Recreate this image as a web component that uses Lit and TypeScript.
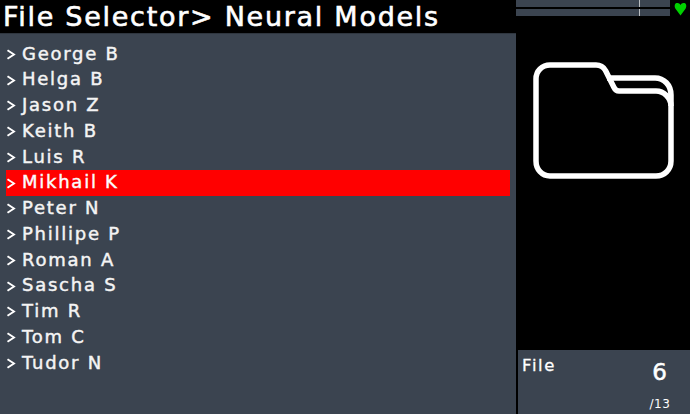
import { LitElement, html, css } from "lit";
import { customElement } from "lit/decorators.js";

const NAMES = ["George B","Helga B","Jason Z","Keith B","Luis R","Mikhail K","Peter N","Phillipe P","Roman A","Sascha S","Tim R","Tom C","Tudor N"];

@customElement("app-root")
export class AppRoot extends LitElement {
  static styles = css`
    :host { display: block; width: 690px; height: 414px; background: #000; color: #fff; font-family: "DejaVu Sans", sans-serif; overflow: hidden; }
    .screen { display: grid; grid-template-columns: 516px 174px; height: 414px; }
    .left { display: flex; flex-direction: column; height: 414px; }
    .title { height: 33px; font-size: 27px; line-height: 34px; padding-left: 3px; white-space: nowrap; letter-spacing: 1.72px; -webkit-text-stroke: 0.6px #fff; }
    .list { flex: 1; background: #3b4450; border-top: 1px solid #2f363f; padding: 7.5px 6px 0 6px; display: flex; flex-direction: column; }
    .row { height: 25.75px; line-height: 23px; font-size: 18px; display: flex; letter-spacing: 1.75px; color: #f4f4f4; -webkit-text-stroke: 0.45px #f4f4f4; }
    .row.sel { background: #ff0000; color: #fff; }
    .chev { width: 16px; flex: none; display: flex; align-items: center; }
    .chev svg { display: block; }
    .right { display: flex; flex-direction: column; height: 414px; }
    .top { display: flex; height: 24px; }
    .bars { width: 154px; display: flex; flex-direction: column; gap: 2px; }
    .bar { background: #3b4450; position: relative; height: 7px; }
    .tick { position: absolute; left: 123px; top: 0; bottom: 0; width: 1px; background: #b8bcc0; }
    .heart { margin: 2px 0 0 4px; }
    .folder { flex: 1; padding: 38px 0 0 17px; }
    .folder svg { display: block; }
    .info { height: 64px; margin-left: 2px; background: #3b4450; display: grid; grid-template-columns: 1fr auto; padding: 0 0 0 4px; }
    .lbl { font-size: 16.5px; line-height: 31px; letter-spacing: 1.6px; -webkit-text-stroke: 0.3px #fff; }
    .nums { width: 56px; display: flex; flex-direction: column; align-items: center; }
    .big { font-size: 23px; line-height: 26px; margin-top: 9px; margin-left: -5px; -webkit-text-stroke: 0.5px #fff; }
    .small { font-size: 12px; line-height: 14px; margin-top: 12px; margin-left: -4px; letter-spacing: 0.6px; }
  `;

  render() {
    return html`<div class="screen">
      <div class="left">
        <div class="title">File Selector&gt; Neural Models</div>
        <div class="list">
          ${NAMES.map((n, i) => html`<div class="row ${i === 5 ? "sel" : ""}">
            <span class="chev"><svg width="10" height="11" viewBox="0 0 10 11"><path d="M1.500 1.200 8 5.500 1.500 9.800" fill="none" stroke="#fff" stroke-width="1.900"/></svg></span>
            <span>${n}</span>
          </div>`)}
        </div>
      </div>
      <div class="right">
        <div class="top">
          <div class="bars">
            <div class="bar"><div class="tick"></div></div>
            <div class="bar"><div class="tick"></div></div>
          </div>
          <svg class="heart" width="13" height="14" viewBox="0 0 13 14"><path d="M6.500 13.500 1.500 6.800C.2 4.800.4 1.600 2.700 1.100c1.700-.4 3.100.5 3.800 2 .7-1.500 2.100-2.400 3.800-2 2.300.5 2.500 3.700 1.200 5.700z" fill="#00d000"/></svg>
        </div>
        <div class="folder">
          <svg width="142" height="118" viewBox="0 0 142 118" fill="none" stroke="#fff" stroke-width="5.500" stroke-linejoin="round">
            <path d="M17 3H63c4.500 0 7.500 2 9.500 5.500L81 25.500c1.200 2.500 2.500 3.500 5 3.500H123c8 0 15 7 15 15V99c0 8.500-6.500 15-15 15H17C9 114 3 107.500 3 99V17C3 9 9 3 17 3Z"/>
            <path d="M74 16H122c9 0 16 7 16 17V44" />
          </svg>
        </div>
        <div class="info">
          <div class="lbl">File</div>
          <div class="nums"><div class="big">6</div><div class="small">/13</div></div>
        </div>
      </div>
    </div>`;
  }
}
